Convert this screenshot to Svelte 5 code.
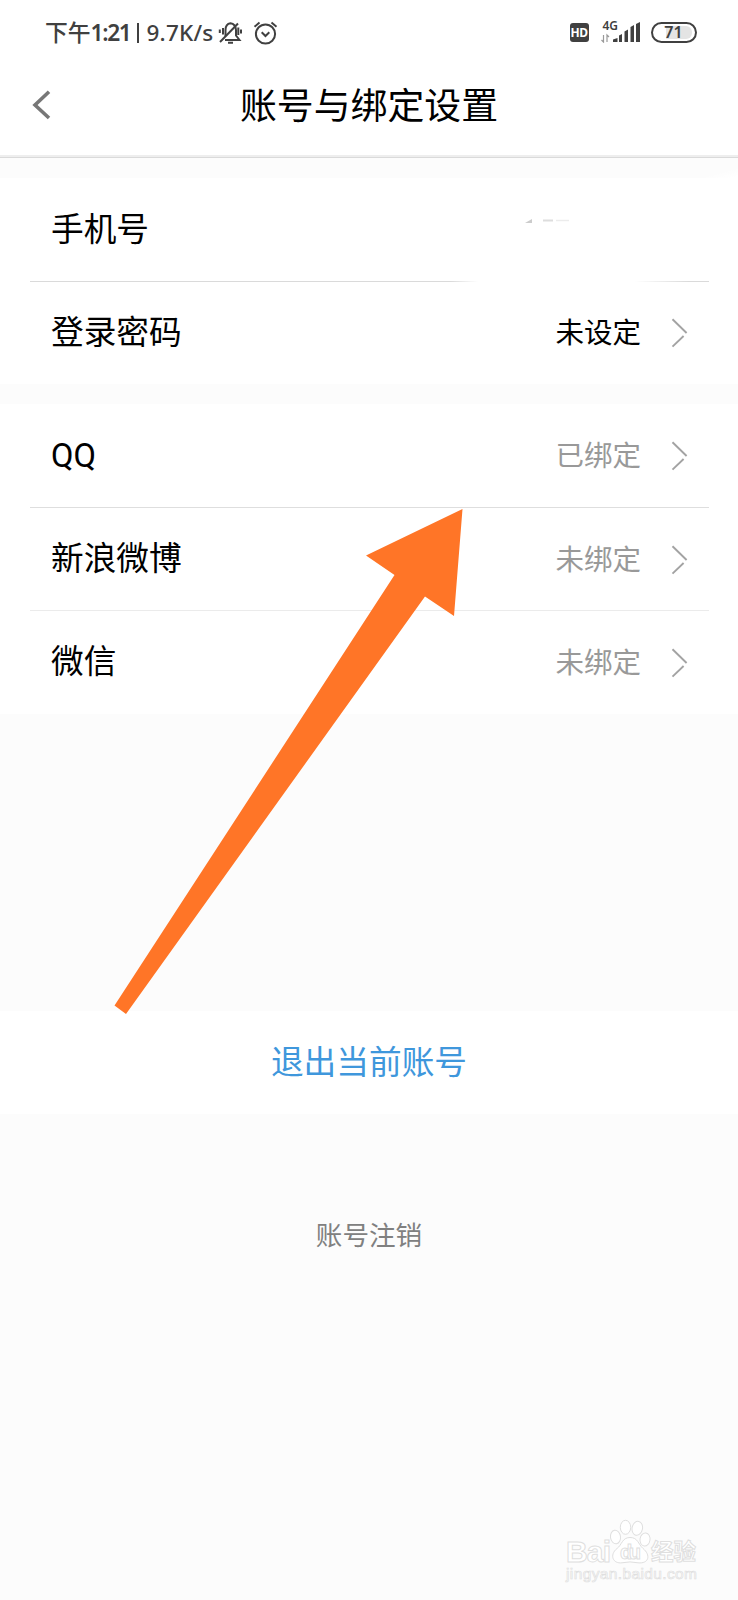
<script lang="ts">
  type Item = { label: string; value: string; dark?: boolean };

  const security: Item[] = [
    { label: "手机号", value: "" },
    { label: "登录密码", value: "未设定", dark: true },
  ];

  const bindings: Item[] = [
    { label: "QQ", value: "已绑定" },
    { label: "新浪微博", value: "未绑定" },
    { label: "微信", value: "未绑定" },
  ];
</script>

{#snippet row(item: Item)}
  <li class="row">
    <span class="label">{item.label}</span>
    {#if item.value}
      <span class="value" class:dark={item.dark}>{item.value}</span>
      <svg class="chevron" width="17" height="30" viewBox="0 0 17 30">
        <path d="M1.5 1.2 L15.6 15 M12.6 18 L1.5 28.6" />
      </svg>
    {:else}
      <svg class="erased" width="70" height="12" viewBox="0 0 70 12">
        <path d="M2 8 L9 4 V8 Z" fill="#ccc" />
        <path d="M20 5.5 H30" stroke="#ddd" stroke-width="2" />
        <path d="M33 5.5 H46" stroke="#ececec" stroke-width="1.5" />
      </svg>
    {/if}
  </li>
{/snippet}

<div class="page">
  <div class="status">
    <span class="clock">下午<span class="time">1:21</span></span>
    <span class="bar"></span>
    <span class="speed">9.7K/s</span>
    <svg class="bell" width="24" height="24" viewBox="0 0 24 24">
      <path d="M7.5 15 V9 Q7.5 3 12.5 2.2 Q17.5 2.8 18 9 V14.5 L21.5 19 H7" />
      <path d="M2 21 L20 2.5" />
      <path d="M5 7 V13.5 M1.8 8.5 V12 M20.3 6.5 V14 M23 8.5 V12.5 M10 21.8 H15" />
    </svg>
    <svg class="alarm" width="25" height="24" viewBox="0 0 25 24">
      <circle cx="12.5" cy="13" r="9.6" />
      <path d="M8.7 11.3 L12.5 15 L16.3 11.3 M1.5 5.8 L6.5 1.6 M23.5 5.8 L18.5 1.6" />
    </svg>
    <span class="hd">HD</span>
    <div class="signal">
      <span class="net">4G</span>
      <svg width="40" height="21" viewBox="0 0 40 21">
        <path class="data" d="M2.5 13 V20 L0.5 18 M6 20 V13 L8 15" />
        <path d="M12 20 V17.5 L16.5 16 V20 Z M18 20 V13.5 L21 12 V20 Z M23.5 20 V9.5 L27 7.5 V20 Z M29.5 20 V5 L33 3 V20 Z M35 20 V2 L39 0 V20 Z" />
      </svg>
    </div>
    <span class="battery"><span>71</span></span>
  </div>

  <header>
    <svg class="back" width="19" height="30" viewBox="0 0 19 30">
      <path d="M17 1.8 L3 15 L17 28" />
    </svg>
    <h1>账号与绑定设置</h1>
  </header>

  <ul class="group first">
    {#each security as item}
      {@render row(item)}
    {/each}
  </ul>

  <ul class="group">
    {#each bindings as item}
      {@render row(item)}
    {/each}
  </ul>

  <button class="logout">退出当前账号</button>
  <button class="cancel">账号注销</button>

  <svg class="pointer" width="349" height="506" viewBox="0 0 349 506">
    <path d="M348.5 0 L252 46.5 L280.5 66 L0.5 496.5 L12 505 L311 87.5 L340 107 Z" />
  </svg>

  <svg class="watermark" width="140" height="70" viewBox="0 0 140 70">
    <text class="brand" x="1" y="41.5" font-size="30" textLength="45">Bai</text>
    <g class="paw">
      <ellipse cx="50.5" cy="17" rx="5" ry="6.8" transform="rotate(-8 50.5 17)" />
      <ellipse cx="60.5" cy="7.3" rx="5.2" ry="7" />
      <ellipse cx="72.3" cy="8.3" rx="5.2" ry="7" transform="rotate(12 72.3 8.3)" />
      <ellipse cx="80" cy="19.5" rx="5" ry="6.6" transform="rotate(8 80 19.5)" />
      <path d="M65 17.5 C57 17.5 57 25 52 28.5 C44 35 48 44 57 42.8 Q65 41 73 42.8 C84 44 86 35 78 28.5 C73 24 73 17.5 65 17.5 Z" />
    </g>
    <text class="du" x="55" y="39" font-size="20" textLength="21">du</text>
    <text class="brand cn" x="86" y="40" font-size="22.5" textLength="45">经验</text>
    <text class="url" x="1" y="59" font-size="15.5" textLength="131">jingyan.baidu.com</text>
  </svg>
</div>

<style>
  :global(body) {
    margin: 0;
  }

  .page {
    position: relative;
    width: 738px;
    height: 1600px;
    overflow: hidden;
    background: #fcfcfc;
    color: #000;
    font-family: "Noto Sans CJK SC", sans-serif;
  }

  .status {
    display: flex;
    align-items: center;
    box-sizing: border-box;
    height: 66px;
    padding-left: 45px;
    background: #fff;
    color: #404040;
    white-space: nowrap;
  }

  .clock {
    width: 84px;
    padding-bottom: 1px;
    font-size: 22.8px;
    font-weight: 500;
    line-height: 30px;
  }

  .time {
    font-family: "Noto Sans", sans-serif;
    font-weight: 600;
    letter-spacing: -1.4px;
  }

  .bar {
    width: 2px;
    height: 20px;
    margin: 0 8px 0 7.5px;
    background: #404040;
  }

  .speed {
    width: 71px;
    font: 500 22.5px/30px "Noto Sans", sans-serif;
    letter-spacing: 0.2px;
  }

  .bell,
  .alarm {
    fill: none;
    stroke: #404040;
    stroke-width: 2;
  }

  .alarm {
    margin-left: 11px;
  }

  .hd {
    width: 19px;
    height: 19px;
    margin: -1px 0 0 292px;
    border-radius: 3px;
    background: #404040;
    color: #fff;
    font: bold 12px/20px "Noto Sans", sans-serif;
    text-align: center;
    letter-spacing: -0.5px;
  }

  .signal {
    display: grid;
    margin: -2px 0 0 12px;
  }

  .signal > * {
    grid-area: 1 / 1;
  }

  .signal svg {
    fill: #404040;
  }

  .signal .data {
    fill: none;
    stroke: #999;
    stroke-width: 1.2;
  }

  .net {
    margin: -3px 0 0 2px;
    font: 600 12px/14px "Noto Sans", sans-serif;
  }

  .battery {
    box-sizing: border-box;
    width: 46px;
    height: 21px;
    margin: -1px 0 0 10px;
    padding: 2px 3px;
    border: 2px solid #404040;
    border-radius: 11px;
    text-align: center;
    font: 600 16px/13px "Noto Sans", sans-serif;
  }

  .battery span {
    display: block;
    border-radius: 6px;
    background: linear-gradient(90deg, #fff 28%, #e4e4e4 28%);
  }

  header {
    display: grid;
    grid-template-columns: 80px 1fr 80px;
    align-items: center;
    box-sizing: border-box;
    height: 92px;
    padding-bottom: 13px;
    border-bottom: 1px solid #dadada;
    background: #fff;
    box-shadow: inset 0 -2px #eee;
  }

  .back {
    margin-left: 32px;
    fill: none;
    stroke: #777;
    stroke-width: 3.6;
  }

  h1 {
    margin: 0;
    padding-bottom: 4px;
    font-size: 36.9px;
    font-weight: 400;
    line-height: 50px;
    text-align: center;
    white-space: nowrap;
  }

  ul {
    margin: 0;
    padding: 0;
    list-style: none;
  }

  .group {
    margin-top: 20px;
    background: #fff;
  }

  .first {
    margin-top: 0;
    border-top: 20px solid transparent;
    background: linear-gradient(165deg, transparent 70%, #fff 95%) 100% 0 / 60px 20px no-repeat border-box,
      linear-gradient(#fff, #fff) padding-box;
  }

  .row {
    display: flex;
    align-items: center;
    height: 103px;
    padding: 0 50px 0 51px;
    background: linear-gradient(#dedede, #dedede) 30px 100% / 679px 1px no-repeat;
  }

  .row:first-child {
    height: 104px;
  }

  .row:last-child {
    background: none;
  }

  .first .row:last-child {
    height: 102px;
  }

  .group:not(.first) .row:nth-child(2) {
    background-image: linear-gradient(#ebebeb, #ebebeb);
  }

  .group.first .row:first-child {
    background-image: linear-gradient(90deg, #dadada 62%, transparent 66%, transparent 89%, #dadada 97%);
  }

  .label {
    flex: 1;
    padding-bottom: 1px;
    font-family: Roboto, "Noto Sans CJK SC", sans-serif;
    font-size: 32.7px;
    line-height: 48px;
  }

  .value {
    padding-bottom: 4px;
    color: #999;
    font-size: 28.5px;
    line-height: 42px;
  }

  .value.dark {
    color: #000;
  }

  .chevron {
    margin-left: 30px;
    fill: none;
    stroke: #a3a3a3;
    stroke-width: 1.9;
  }

  .erased {
    margin: -18px 95px 0 0;
  }

  button {
    display: block;
    padding: 0;
    border: 0;
    font-family: inherit;
  }

  .logout {
    width: 100%;
    height: 103px;
    margin-top: 297px;
    padding-bottom: 6px;
    background: #fff;
    color: #3f97dc;
    font-size: 32.7px;
  }

  .cancel {
    margin: 100px auto 0;
    background: none;
    color: #808080;
    font-size: 26.6px;
    line-height: 40px;
  }

  .pointer {
    position: absolute;
    left: 114px;
    top: 509px;
    fill: #ff7527;
  }

  .watermark {
    position: absolute;
    left: 565px;
    top: 1520px;
    overflow: visible;
    fill: #fff;
    stroke: #dfdfdf;
    stroke-width: 1;
    font-family: "Liberation Sans", sans-serif;
  }

  .watermark .brand {
    font-weight: bold;
  }

  .watermark .cn {
    font-family: "Noto Sans CJK SC", sans-serif;
  }

  .watermark .du {
    font-weight: bold;
  }

  .watermark .url {
    stroke-width: 0.7;
  }
</style>
